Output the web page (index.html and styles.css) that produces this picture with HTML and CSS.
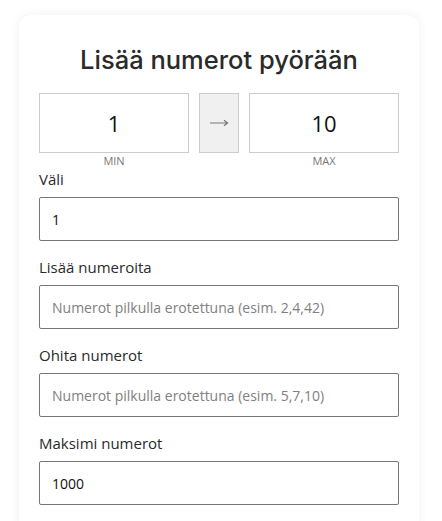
FILE: index.html
```html
<!DOCTYPE html>
<html lang="fi">
<head>
    <meta charset="UTF-8">
    <meta name="viewport" content="width=device-width, initial-scale=1.0">
    <title>Lisää numerot pyörään</title>
    <link rel="stylesheet" href="styles.css">
</head>
<body>
    <div class="wheel-card">
        <h1>Lisää numerot pyörään</h1>

        <div class="range-row">
            <div class="range-field">
                <input class="range-input" type="text" value="1">
                <span class="range-label">MIN</span>
            </div>
            <div class="range-arrow">
                <svg width="20" height="8" viewBox="0 0 20 8">
                    <path d="M1 4H18.5M15 1.2L18.6 4L15 6.8" fill="none" stroke="#777" stroke-width="1.2"/>
                </svg>
            </div>
            <div class="range-field">
                <input class="range-input" type="text" value="10">
                <span class="range-label">MAX</span>
            </div>
        </div>

        <div class="form-group">
            <label for="step">Väli</label>
            <input id="step" class="text-input" type="text" value="1">
        </div>

        <div class="form-group">
            <label for="extra">Lisää numeroita</label>
            <input id="extra" class="text-input" type="text" placeholder="Numerot pilkulla erotettuna (esim. 2,4,42)">
        </div>

        <div class="form-group">
            <label for="skip">Ohita numerot</label>
            <input id="skip" class="text-input" type="text" placeholder="Numerot pilkulla erotettuna (esim. 5,7,10)">
        </div>

        <div class="form-group">
            <label for="max">Maksimi numerot</label>
            <input id="max" class="text-input" type="text" value="1000">
        </div>
    </div>
</body>
</html>
```

FILE: styles.css
```css
:root {
    --text-color: #111;
    --muted-color: #777;
    --light-border: #ccc;
    --input-border: #767676;
}

* {
    margin: 0;
    padding: 0;
    box-sizing: border-box;
}

body {
    font-family: "Open Sans", Arial, sans-serif;
    background-color: #fff;
    color: var(--text-color);
    padding: 15px 19px;
}

.wheel-card {
    width: 400px;
    background-color: #fff;
    border-radius: 12px;
    box-shadow: 0 0 12px rgba(0, 0, 0, 0.06);
    padding: 30px 20px 20px;
}

h1 {
    font-family: Inter, "Open Sans", sans-serif;
    font-size: 25.5px;
    font-weight: 500;
    color: #2a2a2a;
    text-align: center;
    line-height: 30px;
    margin-bottom: 18px;
}

.range-row {
    display: flex;
    gap: 10px;
    align-items: flex-start;
}

.range-field {
    flex: 1;
    display: flex;
    flex-direction: column;
    align-items: center;
}

.range-input {
    width: 100%;
    height: 60px;
    border: 1px solid var(--light-border);
    text-align: center;
    font-family: inherit;
    font-size: 22px;
    color: var(--text-color);
    outline: none;
}

.range-label {
    font-size: 11px;
    color: var(--muted-color);
    line-height: 15px;
}

.range-arrow {
    width: 40px;
    height: 60px;
    background-color: #f0f0f0;
    border: 1px solid var(--light-border);
    display: flex;
    align-items: center;
    justify-content: center;
}

.form-group {
    display: flex;
    flex-direction: column;
    margin-bottom: 15px;
}

.form-group label {
    font-size: 15px;
    line-height: 22px;
    margin-bottom: 7px;
    color: #2a2a2a;
}

.text-input {
    height: 44px;
    border: 1px solid var(--input-border);
    border-radius: 2px;
    padding: 0 12px;
    font-family: inherit;
    font-size: 14px;
    color: var(--text-color);
    outline: none;
}

.text-input::placeholder {
    color: #808080;
}
```
